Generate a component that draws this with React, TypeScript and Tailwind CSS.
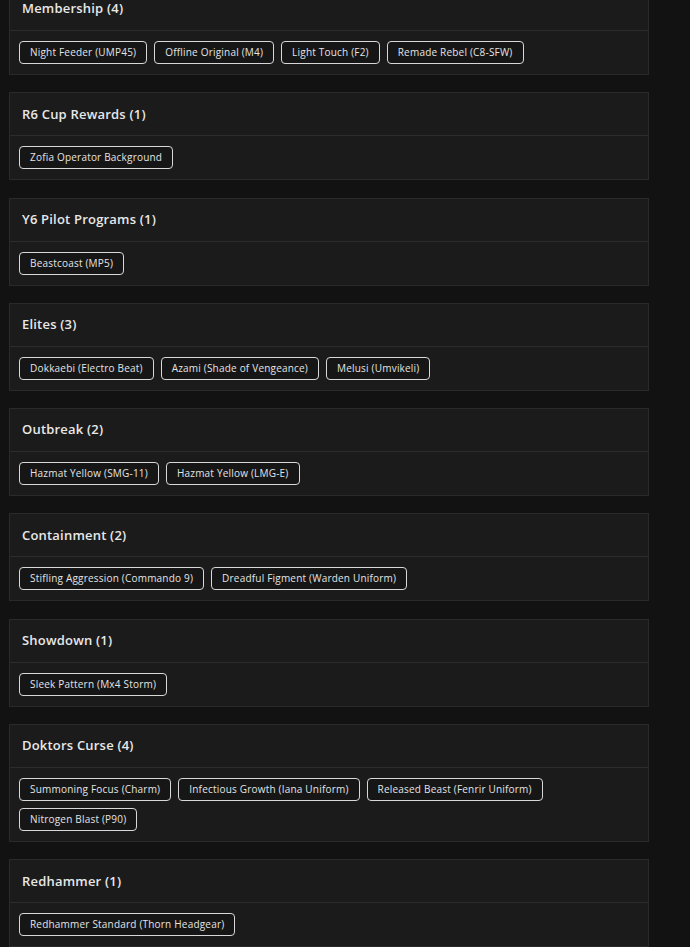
import React from "react";

const sections: { title: string; items: string[] }[] = [
  { title: "Membership (4)", items: ["Night Feeder (UMP45)", "Offline Original (M4)", "Light Touch (F2)", "Remade Rebel (C8-SFW)"] },
  { title: "R6 Cup Rewards (1)", items: ["Zofia Operator Background"] },
  { title: "Y6 Pilot Programs (1)", items: ["Beastcoast (MP5)"] },
  { title: "Elites (3)", items: ["Dokkaebi (Electro Beat)", "Azami (Shade of Vengeance)", "Melusi (Umvikeli)"] },
  { title: "Outbreak (2)", items: ["Hazmat Yellow (SMG-11)", "Hazmat Yellow (LMG-E)"] },
  { title: "Containment (2)", items: ["Stifling Aggression (Commando 9)", "Dreadful Figment (Warden Uniform)"] },
  { title: "Showdown (1)", items: ["Sleek Pattern (Mx4 Storm)"] },
  { title: "Doktors Curse (4)", items: ["Summoning Focus (Charm)", "Infectious Growth (Iana Uniform)", "Released Beast (Fenrir Uniform)", "Nitrogen Blast (P90)"] },
  { title: "Redhammer (1)", items: ["Redhammer Standard (Thorn Headgear)"] },
];

export default function App() {
  return (
    <div
      className="min-h-[947px] h-[947px] overflow-hidden bg-[#121212] text-[#e6e6e6]"
      style={{ fontFamily: '"Open Sans", "Noto Sans", sans-serif' }}
    >
      <div className="-mt-[13px] pl-[9px] w-[649px] flex flex-col gap-[17.3px]">
        {sections.map((s) => (
          <div key={s.title} className="bg-[#1b1b1b] border border-[#2a2a2a]">
            <div className="h-[43px] flex items-center px-[12px] border-b border-[#2c2c2c]">
              <span className="text-[13px] font-semibold tracking-[0.2px] text-[#e8e8e8]">{s.title}</span>
            </div>
            <div className="px-[9px] pt-[10px] pb-[10px] flex flex-wrap gap-[7px]">
              {s.items.map((it) => (
                <div
                  key={it}
                  className="h-[23px] px-[10px] flex items-center rounded-[4px] border border-[#d8d8d8] bg-[#161616] text-[10px] text-[#e4e4e4] tracking-[0.2px]"
                >
                  {it}
                </div>
              ))}
            </div>
          </div>
        ))}
      </div>
    </div>
  );
}
